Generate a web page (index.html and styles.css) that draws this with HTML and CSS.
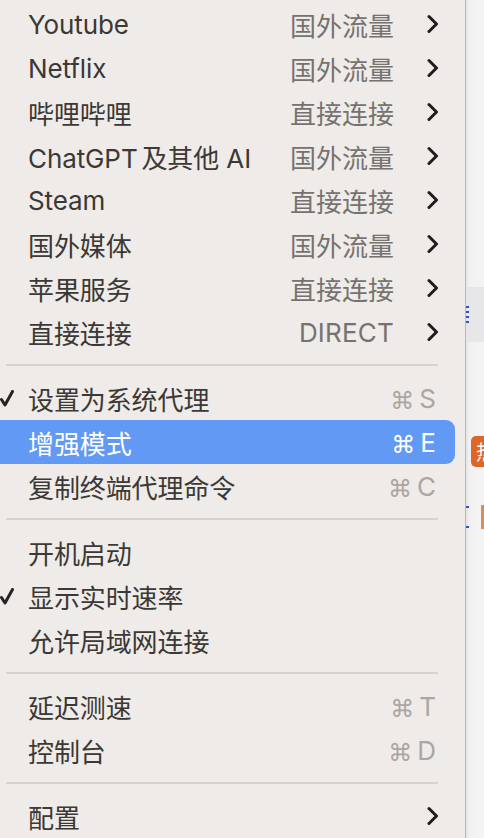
FILE: index.html
```html
<!DOCTYPE html>
<html lang="zh-CN">
<head>
<meta charset="utf-8">
<title>Menu</title>
<link rel="stylesheet" href="styles.css">
</head>
<body>
<div class="screen">
  <div class="menu">
    <div class="row"><span class="gutter"></span><span class="label">Youtube</span><span class="value">国外流量</span><span class="chev"><svg width="12" height="20" viewBox="0 0 12 20"><path d="M2 2.5 L9.5 10 L2 17.5" /></svg></span></div>
    <div class="row"><span class="gutter"></span><span class="label">Netflix</span><span class="value">国外流量</span><span class="chev"><svg width="12" height="20" viewBox="0 0 12 20"><path d="M2 2.5 L9.5 10 L2 17.5" /></svg></span></div>
    <div class="row"><span class="gutter"></span><span class="label">哔哩哔哩</span><span class="value">直接连接</span><span class="chev"><svg width="12" height="20" viewBox="0 0 12 20"><path d="M2 2.5 L9.5 10 L2 17.5" /></svg></span></div>
    <div class="row"><span class="gutter"></span><span class="label">ChatGPT<span class="thin"> </span>及其他 AI</span><span class="value">国外流量</span><span class="chev"><svg width="12" height="20" viewBox="0 0 12 20"><path d="M2 2.5 L9.5 10 L2 17.5" /></svg></span></div>
    <div class="row"><span class="gutter"></span><span class="label">Steam</span><span class="value">直接连接</span><span class="chev"><svg width="12" height="20" viewBox="0 0 12 20"><path d="M2 2.5 L9.5 10 L2 17.5" /></svg></span></div>
    <div class="row"><span class="gutter"></span><span class="label">国外媒体</span><span class="value">国外流量</span><span class="chev"><svg width="12" height="20" viewBox="0 0 12 20"><path d="M2 2.5 L9.5 10 L2 17.5" /></svg></span></div>
    <div class="row"><span class="gutter"></span><span class="label">苹果服务</span><span class="value">直接连接</span><span class="chev"><svg width="12" height="20" viewBox="0 0 12 20"><path d="M2 2.5 L9.5 10 L2 17.5" /></svg></span></div>
    <div class="row"><span class="gutter"></span><span class="label">直接连接</span><span class="value latin">DIRECT</span><span class="chev"><svg width="12" height="20" viewBox="0 0 12 20"><path d="M2 2.5 L9.5 10 L2 17.5" /></svg></span></div>

    <div class="sep"></div>

    <div class="row"><span class="gutter"><svg class="check" width="14" height="17" viewBox="0 0 14 17"><path d="M1.5 9.5 L5 15 L12.5 1.5" /></svg></span><span class="label">设置为系统代理</span><span class="key"><span class="cmd">⌘</span>S</span></div>
    <div class="row active"><span class="gutter"></span><span class="label">增强模式</span><span class="key"><span class="cmd">⌘</span>E</span></div>
    <div class="row"><span class="gutter"></span><span class="label">复制终端代理命令</span><span class="key"><span class="cmd">⌘</span>C</span></div>

    <div class="sep"></div>

    <div class="row"><span class="gutter"></span><span class="label">开机启动</span></div>
    <div class="row"><span class="gutter"><svg class="check" width="14" height="17" viewBox="0 0 14 17"><path d="M1.5 9.5 L5 15 L12.5 1.5" /></svg></span><span class="label">显示实时速率</span></div>
    <div class="row"><span class="gutter"></span><span class="label">允许局域网连接</span></div>

    <div class="sep"></div>

    <div class="row"><span class="gutter"></span><span class="label">延迟测速</span><span class="key"><span class="cmd">⌘</span>T</span></div>
    <div class="row"><span class="gutter"></span><span class="label">控制台</span><span class="key"><span class="cmd">⌘</span>D</span></div>

    <div class="sep"></div>

    <div class="row"><span class="gutter"></span><span class="label">配置</span><span class="chev"><svg width="12" height="20" viewBox="0 0 12 20"><path d="M2 2.5 L9.5 10 L2 17.5" /></svg></span></div>
  </div>
  <div class="behind">
    <div class="band"><span class="blue-bars"></span></div>
    <div class="badge-line"><span class="badge">热</span></div>
    <div class="frag-line"><span class="blue-bars small"></span><span class="orange-frag"></span></div>
  </div>
</div>
</body>
</html>
```

FILE: styles.css
```css
html, body {
  margin: 0;
  padding: 0;
  width: 484px;
  height: 838px;
  overflow: hidden;
  background: #f3f3f3;
}

.screen {
  display: flex;
  width: 484px;
  height: 838px;
  font-family: Inter, "Noto Sans CJK SC", sans-serif;
}

.menu {
  width: 466px;
  flex: none;
  height: 838px;
  box-sizing: border-box;
  padding-top: 2px;
  background: #efebe8;
  border-right: 1px solid #bcb8b5;
  display: flex;
  flex-direction: column;
}

.row {
  display: flex;
  align-items: center;
  height: 44px;
  flex: none;
  width: 455px;
  box-sizing: border-box;
  padding-right: 16px;
  font-size: 26px;
  color: #3b3835;
  border-radius: 0 9px 9px 0;
}

.row.active {
  background: #6199f5;
  color: #ffffff;
}

.gutter {
  width: 28px;
  flex: none;
  display: flex;
  align-items: center;
}

.check path {
  fill: none;
  stroke: #262422;
  stroke-width: 3;
  stroke-linecap: round;
  stroke-linejoin: round;
}

.label {
  flex: 1;
  white-space: nowrap;
  letter-spacing: -0.1px;
}

.thin {
  font-size: 14px;
}

.value {
  color: #76726f;
  white-space: nowrap;
}

.value.latin {
  letter-spacing: 0.2px;
}

.chev {
  width: 45px;
  flex: none;
  display: flex;
  justify-content: flex-end;
  align-items: center;
}

.chev path {
  fill: none;
  stroke: #1e1d1c;
  stroke-width: 3;
  stroke-linecap: round;
  stroke-linejoin: round;
}

.key {
  display: flex;
  align-items: center;
  gap: 5px;
  margin-right: 3px;
  color: #aaa6a3;
  font-size: 26px;
}

.active .key {
  color: #ffffff;
}

.cmd {
  display: block;
  font-family: "DejaVu Sans", sans-serif;
  font-size: 24px;
  line-height: 1;
  padding-top: 5px;
}

.sep {
  height: 22px;
  flex: none;
  display: flex;
  align-items: center;
  padding-left: 6px;
}

.sep::before {
  content: "";
  display: block;
  width: 432px;
  height: 2px;
  background: #d6d2cf;
}

.behind {
  flex: 1;
  overflow: hidden;
  display: flex;
  flex-direction: column;
  background: linear-gradient(90deg, #e4e4e4 0, #f1f1f1 3px, #f4f4f4 100%);
}

.band {
  margin-top: 287px;
  height: 55px;
  background: #e7e7e9;
  display: flex;
  align-items: center;
}

.blue-bars {
  display: block;
  width: 3px;
  height: 18px;
  margin-left: 0;
  background: repeating-linear-gradient(180deg, #3251c4 0 2px, transparent 2px 5px);
}

.badge-line {
  margin-top: 94px;
  height: 31px;
  display: flex;
  padding-left: 5px;
}

.badge {
  display: flex;
  align-items: center;
  justify-content: center;
  width: 30px;
  height: 31px;
  flex: none;
  border-radius: 5px;
  background: #de6628;
  color: #ffffff;
  font-size: 20px;
  font-family: "Noto Sans CJK SC", sans-serif;
}

.frag-line {
  margin-top: 38px;
  height: 24px;
  display: flex;
  align-items: center;
  justify-content: space-between;
}

.blue-bars.small {
  height: 22px;
  background: linear-gradient(180deg, #3251c4 0 2px, transparent 2px 20px, #3251c4 20px 22px);
}

.orange-frag {
  width: 3px;
  height: 24px;
  background: #e58a4f;
  flex: none;
}
```
